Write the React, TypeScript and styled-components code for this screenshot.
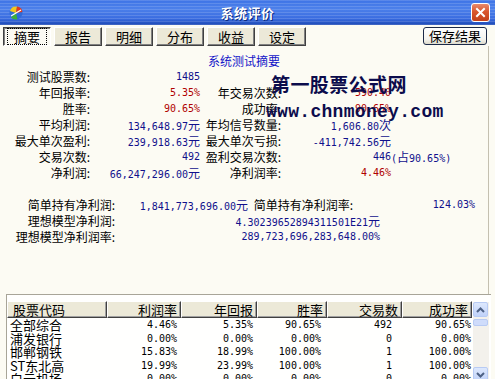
import React from 'react'
import styled, { createGlobalStyle } from 'styled-components'

const GlobalStyle = createGlobalStyle`
  html, body {
    margin: 0;
    padding: 0;
    background: #fcfbf3;
  }
  body {
    font-family: "Noto Sans CJK SC", "Liberation Sans", sans-serif;
    font-size: 12px;
    color: #000;
  }
`

const Window = styled.div`
  width: 495px;
  height: 379px;
  overflow: hidden;
  display: flex;
  flex-direction: column;
  background: #fcfbf3;
`

const TitleBar = styled.div`
  flex: none;
  height: 25px;
  display: grid;
  grid-template-columns: 1fr auto 1fr;
  align-items: center;
  background:
    repeating-linear-gradient(180deg, rgba(255,255,255,0.14) 0 1px, rgba(255,255,255,0) 1px 3px),
    linear-gradient(180deg, #3e74e6 0%, #4c80ea 35%, #3a6ce0 75%, #1c48b4 100%);
`

const TitleIcon = styled.div`
  display: flex;
  padding-left: 8px;
`

const TitleText = styled.div`
  color: #fff;
  font-weight: bold;
  font-size: 13px;
  line-height: 25px;
  letter-spacing: 0.5px;
  text-shadow: 1px 1px 0 #0a2a80;
`

const TitleRight = styled.div`
  display: flex;
  justify-content: flex-end;
  padding-right: 5px;
`

const CloseButton = styled.div`
  width: 19px;
  height: 19px;
  box-sizing: border-box;
  border: 1px solid #fff;
  border-radius: 3px;
  background: linear-gradient(180deg, #e88a6c 0%, #d9562e 45%, #c2401a 100%);
  display: flex;
  align-items: center;
  justify-content: center;
`

const Body = styled.div`
  flex: 1;
  display: flex;
  flex-direction: column;
  padding: 0 6px 0 3px;
`

const TabBar = styled.div`
  height: 21px;
  box-sizing: border-box;
  padding-top: 2px;
  display: flex;
  gap: 3px;
`

const Tab = styled.div<{ $active?: boolean }>`
  width: 48px;
  height: 19px;
  box-sizing: border-box;
  display: flex;
  align-items: center;
  justify-content: center;
  font-size: 13px;
  line-height: 13px;
  background: ${p => (p.$active ? '#fbfaf2' : '#ece9d8')};
  border: 1px solid;
  border-color: ${p => (p.$active ? '#404040 #ffffff #ffffff #404040' : '#ffffff #404040 #404040 #ffffff')};
  box-shadow: ${p => (p.$active ? 'inset 1px 1px 0 #808080' : 'inset -1px -1px 0 #808080')};

  span {
    padding: 1px 6px;
    outline: ${p => (p.$active ? '1px dotted #000' : 'none')};
  }
`

const SaveButton = styled.div`
  margin-left: auto;
  margin-right: 2px;
  width: 64px;
  height: 18px;
  box-sizing: border-box;
  border: 1px solid #1c2a48;
  border-radius: 3px;
  background: linear-gradient(180deg, #ffffff 0%, #f4f3ee 70%, #dedbcc 100%);
  font-size: 13px;
  line-height: 16px;
  text-align: center;
`

const Panel = styled.div`
  position: relative;
  height: 248px;
  box-sizing: border-box;
  border-right: 1px solid #c4c0b0;
  padding: 7px 0 0 1px;
`

const PanelTitle = styled.div`
  text-align: center;
  color: #1414c8;
  font-size: 12px;
  line-height: 16px;
  padding-left: 10px;
  padding-right: 14px;
`

const Rows = styled.div<{ $gap?: number }>`
  margin-top: ${p => p.$gap ?? 0}px;
`

const Row = styled.div<{ $cols: string }>`
  display: grid;
  grid-template-columns: ${p => p.$cols};
  height: 16px;
  line-height: 16px;
  white-space: nowrap;
`

const Label = styled.div`
  text-align: right;
  font-size: 12px;
`

const Value = styled.div<{ $red?: boolean; $left?: boolean }>`
  text-align: ${p => (p.$left ? 'left' : 'right')};
  font-family: "DejaVu Sans Mono", "Noto Sans CJK SC", monospace;
  font-size: 10px;
  color: ${p => (p.$red ? '#b00000' : '#10108c')};
`

const Unit = styled.span`
  font-family: "Noto Sans CJK SC", sans-serif;
  font-size: 12px;
`

const Watermark = styled.div<{ $top: number; $left: number }>`
  position: absolute;
  top: ${p => p.$top}px;
  left: ${p => p.$left}px;
  white-space: nowrap;
  color: #0c0c4c;
  pointer-events: none;
`

const WaterCn = styled.div`
  font-family: "Noto Sans CJK SC", sans-serif;
  font-weight: bold;
  font-size: 19px;
  line-height: 19px;
  letter-spacing: 0.4px;
`

const WaterUrl = styled.div`
  font-family: "Liberation Mono", monospace;
  font-weight: bold;
  font-size: 18px;
  line-height: 18px;
  letter-spacing: 0.3px;
`

const TableBox = styled.div`
  flex: 1;
  margin: 0 -2px 0 3px;
  border-top: 1px solid #a8a598;
  border-left: 1px solid #a8a598;
  background: #fffffe;
  padding-top: 6px;
  display: flex;
  align-items: flex-start;
`

const List = styled.div`
  width: 465px;
`

const GridRow = styled.div`
  display: grid;
  grid-template-columns: 100px 74px 76px 70px 75px 70px;
`

const HeadCell = styled.div<{ $left?: boolean }>`
  height: 17px;
  box-sizing: border-box;
  border: 1px solid;
  border-color: #ffffff #404040 #404040 #ffffff;
  box-shadow: inset -1px -1px 0 #a0a0a0;
  background: #ece9d8;
  font-size: 13px;
  line-height: 15px;
  text-align: ${p => (p.$left ? 'left' : 'right')};
  padding: ${p => (p.$left ? '0 0 0 5px' : '0 3px 0 0')};
`

const Cell = styled.div<{ $pad?: number; $text?: boolean }>`
  height: 13.5px;
  line-height: 13.5px;
  white-space: nowrap;
  text-align: ${p => (p.$text ? 'left' : 'right')};
  padding: ${p => (p.$text ? '0 0 0 3px' : `0 ${p.$pad ?? 4}px 0 0`)};
  font-family: ${p => (p.$text ? '"Noto Sans CJK SC", sans-serif' : '"DejaVu Sans Mono", monospace')};
  font-size: ${p => (p.$text ? '13px' : '10px')};
`

const ScrollBar = styled.div`
  width: 16px;
  height: 80px;
  margin-left: 1px;
  margin-top: 1px;
  background: #f3f1ec;
  display: flex;
  flex-direction: column;
  gap: 2px;
`

const ScrollButton = styled.div`
  width: 15px;
  height: 15px;
  box-sizing: border-box;
  border: 1px solid #b8cbf4;
  border-radius: 2px;
  background: linear-gradient(180deg, #dde8fd 0%, #c0d2f9 100%);
  display: flex;
  align-items: center;
  justify-content: center;

  &:last-child {
    margin-top: auto;
  }
`

const Thumb = styled.div`
  width: 15px;
  height: 7px;
  box-sizing: border-box;
  border: 1px solid #b8cbf4;
  border-radius: 2px;
  background: #cfdcfb;
`

const AppIcon = () => (
  <svg width="16" height="16" viewBox="0 0 16 16">
    <circle cx="8" cy="8" r="6.5" fill="#2f6ad8" />
    <path d="M8 8 L2 6 A6.5 6.5 0 0 1 9 1.6 Z" fill="#f4c81c" />
    <path d="M8 8 L9 1.6 A6.5 6.5 0 0 1 14.4 7 Z" fill="#e23a1c" />
    <path d="M8 8 L3 12.5 A6.5 6.5 0 0 0 9.5 14.3 Z" fill="#3cae3c" />
    <path d="M3 11 L13 5" stroke="#ffffff" strokeWidth="1.2" />
  </svg>
)

const CloseIcon = () => (
  <svg width="11" height="11" viewBox="0 0 11 11">
    <path d="M2 2 L9 9 M9 2 L2 9" stroke="#fff" strokeWidth="2" strokeLinecap="square" />
  </svg>
)

const Chevron = ({ up }: { up?: boolean }) => (
  <svg width="9" height="6" viewBox="0 0 9 6">
    <path d={up ? 'M1 5 L4.5 1.5 L8 5' : 'M1 1 L4.5 4.5 L8 1'} fill="none" stroke="#4d6185" strokeWidth="2" />
  </svg>
)

const cols1 = '86px 110px 81px 110px 1fr'
const cols2 = '111px 133px 105px 122px 1fr'
const cols3 = '111px 265px 1fr'

const num = (v: string) => {
  const m = v.match(/^(.*?)([元次])$/)
  return m ? (
    <>
      {m[1]}
      <Unit>{m[2]}</Unit>
    </>
  ) : (
    v
  )
}

type Item = { label: string; value: string; red?: boolean }

const summary: [Item, Item | null][] = [
  [{ label: '测试股票数:', value: '1485' }, null],
  [{ label: '年回报率:', value: '5.35%', red: true }, { label: '年交易次数:', value: '590.40', red: true }],
  [{ label: '胜率:', value: '90.65%', red: true }, { label: '成功率:', value: '90.65%', red: true }],
  [{ label: '平均利润:', value: '134,648.97元' }, { label: '年均信号数量:', value: '1,606.80次' }],
  [{ label: '最大单次盈利:', value: '239,918.63元' }, { label: '最大单次亏损:', value: '-411,742.56元' }],
  [{ label: '交易次数:', value: '492' }, { label: '盈利交易次数:', value: '446' }],
  [{ label: '净利润:', value: '66,247,296.00元' }, { label: '净利润率:', value: '4.46%', red: true }],
]

const tableRows = [
  ['全部综合', '4.46%', '5.35%', '90.65%', '492', '90.65%'],
  ['浦发银行', '0.00%', '0.00%', '0.00%', '0', '0.00%'],
  ['邯郸钢铁', '15.83%', '18.99%', '100.00%', '1', '100.00%'],
  ['ST东北高', '19.99%', '23.99%', '100.00%', '1', '100.00%'],
  ['白云机场', '0.00%', '0.00%', '0.00%', '0', '0.00%'],
]

const colPad = [0, 4, 4, 6, 10, 1]
const headers = ['股票代码', '利润率', '年回报', '胜率', '交易数', '成功率']
const tabs = ['摘要', '报告', '明细', '分布', '收益', '设定']

const App: React.FC = () => {
  return (
    <>
      <GlobalStyle />
      <Window>
        <TitleBar>
          <TitleIcon>
            <AppIcon />
          </TitleIcon>
          <TitleText>系统评价</TitleText>
          <TitleRight>
            <CloseButton>
              <CloseIcon />
            </CloseButton>
          </TitleRight>
        </TitleBar>

        <Body>
          <TabBar>
            {tabs.map((t, i) => (
              <Tab key={t} $active={i === 0}>
                <span>{t}</span>
              </Tab>
            ))}
            <SaveButton>保存结果</SaveButton>
          </TabBar>

          <Panel>
            <PanelTitle>系统测试摘要</PanelTitle>
            <Rows>
              {summary.map(([a, b], i) => (
                <Row key={i} $cols={cols1}>
                  <Label>{a.label}</Label>
                  <Value $red={a.red}>{num(a.value)}</Value>
                  <Label>{b ? b.label : ''}</Label>
                  <Value $red={b?.red}>{b ? num(b.value) : ''}</Value>
                  <Value $left>{b?.value === '446' ? <>(<Unit>占</Unit>90.65%)</> : ''}</Value>
                </Row>
              ))}
            </Rows>

            <Rows $gap={16}>
              <Row $cols={cols2}>
                <Label>简单持有净利润:</Label>
                <Value>{num('1,841,773,696.00元')}</Value>
                <Label>简单持有净利润率:</Label>
                <Value>124.03%</Value>
              </Row>
              <Row $cols={cols3}>
                <Label>理想模型净利润:</Label>
                <Value>{num('4.30239652894311501E21元')}</Value>
              </Row>
              <Row $cols={cols3}>
                <Label>理想模型净利润率:</Label>
                <Value>289,723,696,283,648.00%</Value>
              </Row>
            </Rows>

            <Watermark $top={28} $left={268}>
              <WaterCn>第一股票公式网</WaterCn>
            </Watermark>
            <Watermark $top={57} $left={263}>
              <WaterUrl>www.chnmoney.com</WaterUrl>
            </Watermark>
          </Panel>

          <TableBox>
            <List>
              <GridRow>
                {headers.map((h, i) => (
                  <HeadCell key={h} $left={i === 0}>
                    {h}
                  </HeadCell>
                ))}
              </GridRow>
              {tableRows.map(r => (
                <GridRow key={r[0]}>
                  {r.map((c, i) => (
                    <Cell key={i} $text={i === 0} $pad={colPad[i]}>
                      {c}
                    </Cell>
                  ))}
                </GridRow>
              ))}
            </List>
            <ScrollBar>
              <ScrollButton>
                <Chevron up />
              </ScrollButton>
              <Thumb />
              <ScrollButton>
                <Chevron />
              </ScrollButton>
            </ScrollBar>
          </TableBox>
        </Body>
      </Window>
    </>
  )
}

export default App
